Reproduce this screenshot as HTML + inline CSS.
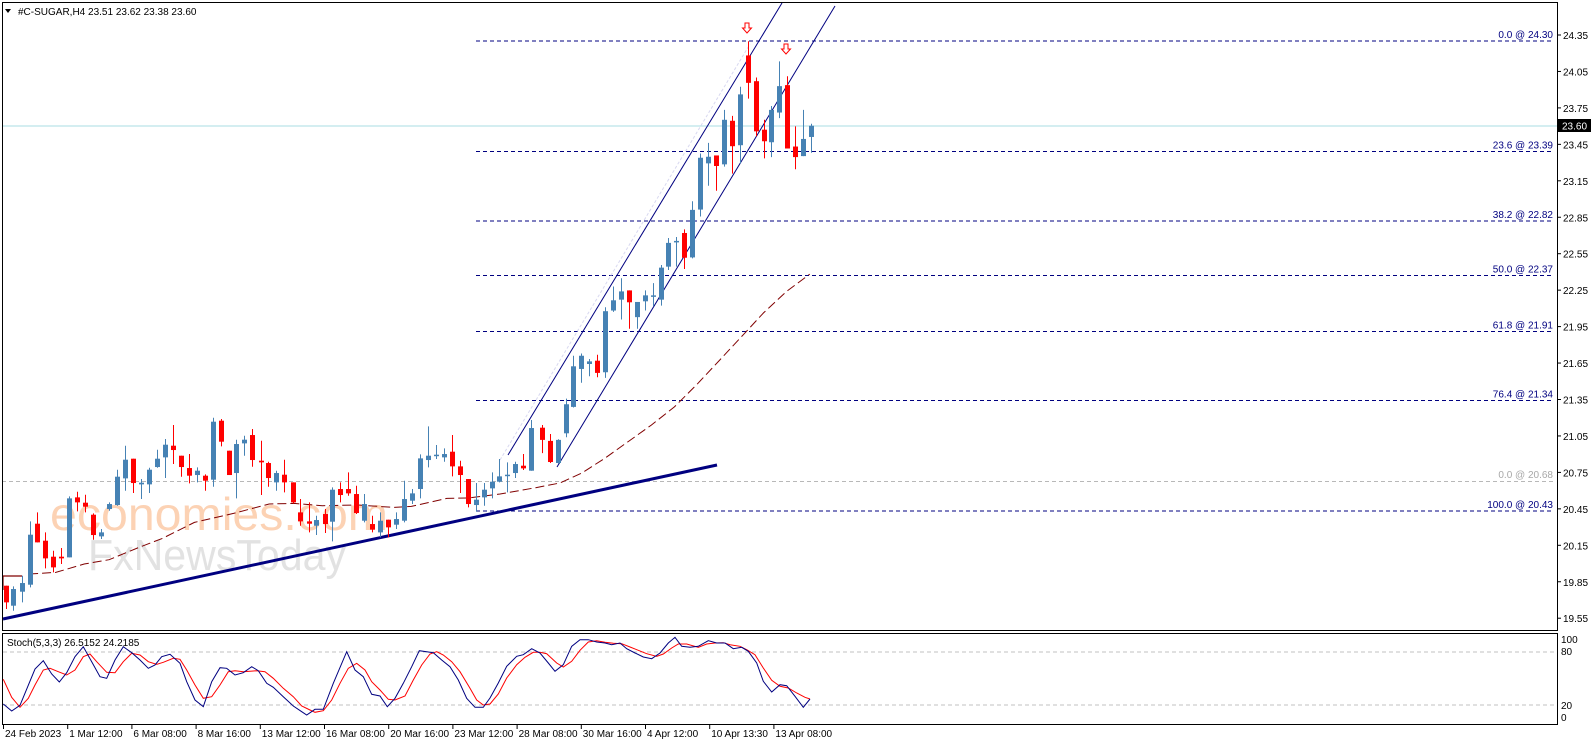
<!DOCTYPE html>
<html><head><meta charset="utf-8">
<style>
html,body{margin:0;padding:0;background:#fff;width:1596px;height:743px;overflow:hidden}
svg{display:block}
text{font-family:"Liberation Sans","DejaVu Sans",sans-serif;font-size:10px}
</style></head>
<body>
<svg id="s" width="1596" height="743" xmlns="http://www.w3.org/2000/svg">
<rect width="1596" height="743" fill="#fff"/>
<text x="50" y="530" font-size="46" fill="#FCD2B4" textLength="338" lengthAdjust="spacingAndGlyphs" style="font-size:46px">economies.com</text>
<text x="88" y="570" font-size="44" fill="#E2E2E2" textLength="258" lengthAdjust="spacingAndGlyphs" style="font-size:44px">FxNewsToday</text>
<g id="g"></g>
</svg>
<script>
var NS="http://www.w3.org/2000/svg",g=document.getElementById('g');
function el(t,a,txt){var e=document.createElementNS(NS,t);for(var k in a)e.setAttribute(k,a[k]);if(txt!=null)e.textContent=txt;g.appendChild(e);return e;}
function P(p){return 35+(24.35-p)*121.5;}
el('line',{x1:2,y1:126,x2:1557,y2:126,stroke:'#A8DDE3','stroke-width':1});
el('line',{x1:2,y1:481.5,x2:1553,y2:481.5,stroke:'#B8B8B8','stroke-dasharray':'4 3'});
el('text',{x:1553,y:478,'text-anchor':'end',fill:'#A8A8A8'},'0.0 @ 20.68');
var fib=[['0.0 @ 24.30',41],['23.6 @ 23.39',151.5],['38.2 @ 22.82',221],['50.0 @ 22.37',275.5],['61.8 @ 21.91',331.5],['76.4 @ 21.34',400.5],['100.0 @ 20.43',511]];
fib.forEach(function(f){el('line',{x1:476,y1:f[1],x2:1553,y2:f[1],stroke:'#000080','stroke-dasharray':'4 3'});el('text',{x:1553,y:f[1]-3,'text-anchor':'end',fill:'#000080'},f[0]);});
var ma5=[[75,595],[150,590],[230,565],[300,552],[380,517],[450,488],[540,440],[650,413],[750,385],[820,383],[900,390],[1000,388],[1100,395],[1150,392],[1250,368],[1310,367],[1400,355],[1500,336],[1568,322]];
var ma6=[[300,1430],[370,1385],[440,1335],[510,1285],[580,1230],[650,1160],[720,1085],[790,1010],[850,945],[920,880],[990,828]];
var pts=[];ma5.forEach(function(p){pts.push((6+(p[0]-10)*0.3555).toFixed(1)+','+(375.7+p[1]/3).toFixed(1));});
ma6.forEach(function(p){pts.push((483+p[0]*0.33).toFixed(1)+','+(1+p[1]*0.33).toFixed(1));});
el('polyline',{points:pts.join(' '),fill:'none',stroke:'#800000','stroke-dasharray':'9 4','stroke-width':1});
el('polyline',{points:'3,590 3,576 22,576',fill:'none',stroke:'#800000','stroke-width':1.2});
el('line',{x1:3,y1:619,x2:717,y2:465,stroke:'#000080','stroke-width':3});
el('line',{x1:508,y1:455,x2:782,y2:3,stroke:'#000080','stroke-width':1});
el('line',{x1:557,y1:467,x2:835,y2:6,stroke:'#000080','stroke-width':1});
el('line',{x1:500,y1:460,x2:750,y2:44,stroke:'#D8D8F0','stroke-width':1,'stroke-dasharray':'3 2'});
var A=[[10,'r',630,680,630,700],[30,'b',640,690,632,705],[55,'b',622,648,600,680],[77,'b',477,627,437,635],[98,'r',444,500,410,500],[120,'r',495,548,470,578],[143,'r',543,575,525,590],[166,'r',543,548,517,565],[188,'b',368,545,362,545],[210,'r',365,380,348,407],[233,'r',381,393,357,410],[255,'r',417,478,413,492],[278,'b',470,482,460,490],[300,'b',385,400,380,405],[322,'b',303,388,282,390],[345,'b',252,308,210,345],[368,'r',249,322,249,352],[390,'b',321,326,310,370],[412,'b',282,326,276,352],[435,'b',249,274,222,276],[458,'b',207,245,190,307],[480,'r',210,223,148,265],[503,'r',240,274,240,303],[525,'r',277,300,235,323],[547,'b',285,298,275,320],[570,'r',300,315,296,345],[592,'b',138,312,126,333],[614,'r',135,198,130,212],[636,'r',225,298,225,298],[658,'b',205,292,192,368],[680,'b',192,203,180,240],[703,'r',178,253,160,273],[727,'r',255,260,195,358],[748,'r',262,307,258,333],[770,'b',292,320,285,345],[793,'r',297,320,252,350],[816,'r',320,380,320,383],[838,'r',410,437,370,450],[862,'r',437,444,380,470],[883,'b',433,450,420,478],[906,'r',415,445,400,472],[928,'b',342,438,335,497],[950,'r',340,358,320,380],[972,'r',340,353,290,360],[995,'r',355,412,330,415],[1018,'b',385,435,355,440],[1040,'r',445,462,420,470],[1062,'b',435,470,410,485],[1085,'r',432,455,432,485],[1107,'b',430,447,410,460],[1130,'b',370,435,315,440],[1152,'b',353,375,340,385],[1175,'b',248,340,236,368],[1197,'b',240,253,152,275],[1220,'b',237,240,208,250],[1242,'b',235,245,218,258],[1265,'r',228,272,178,302],[1287,'r',272,298,255,352],[1310,'r',310,385,310,395],[1332,'b',372,388,322,408],[1355,'b',342,365,322,390],[1376,'b',318,338,290,368],[1398,'b',302,318,250,320],[1420,'b',297,300,260,350],[1443,'b',265,292,258,307],[1465,'r',270,278,235,283],[1487,'b',157,285,133,285]];
var B=[[178,'r',1293,1330,1285,1370],[202,'r',1333,1397,1312,1400],[226,'b',1330,1400,1328,1402],[250,'b',1222,1310,1205,1322],[274,'b',1107,1230,1075,1232],[298,'b',1075,1115,1068,1157],[322,'b',1092,1100,1085,1137],[346,'r',1090,1127,1072,1140],[370,'b',940,1125,928,1142],[394,'b',907,938,865,942],[418,'b',880,905,840,965],[442,'r',877,913,877,993],[466,'b',912,958,912,993],[490,'b',892,910,877,938],[514,'b',892,895,855,925],[538,'b',808,905,800,923],[562,'b',733,805,718,815],[586,'b',727,730,715,805],[610,'r',703,778,692,812],[634,'b',633,777,607,780],[658,'b',475,632,462,653],[682,'b',472,492,430,560],[706,'r',468,500,468,575],[730,'b',360,495,330,502],[754,'r',363,440,348,523],[778,'b',283,437,260,492],[802,'r',165,248,122,296],[826,'r',243,395,232,410],[850,'r',390,425,360,477],[874,'b',330,428,318,473],[898,'b',258,338,183,355],[922,'r',255,447,228,447],[946,'r',441,473,380,510],[970,'b',418,470,330,470],[994,'b',378,412,372,460]];
function candle(x,c,bt,bb,wt,wb){x=Math.round(x);var col=c=='r'?'#FF0000':'#4682B4';
el('line',{x1:x+0.5,y1:wt,x2:x+0.5,y2:wb,stroke:col,'stroke-width':1});
var h=Math.max(bb-bt,1.5);el('rect',{x:x-2,y:bt,width:5,height:h,fill:col});}
A.forEach(function(c){candle(6+(c[0]-10)*0.3555,c[1],375.7+c[2]/3,375.7+c[3]/3,375.7+c[4]/3,375.7+c[5]/3);});
B.forEach(function(c){var f=function(v){return 1+v*0.33};candle(483+c[0]*0.33,c[1],f(c[2]),f(c[3]),f(c[4]),f(c[5]));});
function arrow(x,y){el('path',{d:'M'+(x-2)+','+y+' h4 v5 h2.5 l-4.5,5 l-4.5,-5 h2.5 z',fill:'#fff',stroke:'#FF0000','stroke-width':1});}
arrow(747,23);arrow(786,44);
el('rect',{x:2.5,y:2.5,width:1555,height:628,fill:'none',stroke:'#000','stroke-width':1});
el('rect',{x:2.5,y:633.5,width:1555,height:91,fill:'none',stroke:'#000','stroke-width':1});
el('path',{d:'M5,9 h6 l-3,4 z',fill:'#000'});
el('text',{x:18,y:15,fill:'#000'},'#C-SUGAR,H4  23.51 23.62 23.38 23.60');
var lab=['24.35','24.05','23.75','23.45','23.15','22.85','22.55','22.25','21.95','21.65','21.35','21.05','20.75','20.45','20.15','19.85','19.55'];
lab.forEach(function(l){var y=P(parseFloat(l));el('line',{x1:1557,y1:y,x2:1561,y2:y,stroke:'#000'});el('text',{x:1563,y:y+4,fill:'#000'},l);});
el('rect',{x:1558,y:119,width:33,height:13,fill:'#000'});
el('text',{x:1562,y:129.5,fill:'#fff'},'23.60');
el('line',{x1:3,y1:652,x2:1557,y2:652,stroke:'#C0C0C0','stroke-dasharray':'4 3'});
el('line',{x1:3,y1:705,x2:1557,y2:705,stroke:'#C0C0C0','stroke-dasharray':'4 3'});
el('text',{x:7,y:646,fill:'#000'},'Stoch(5,3,3) 26.5152 24.2185');
[['100',643],['80',655],['20',709],['0',721]].forEach(function(a){el('text',{x:1561,y:a[1],fill:'#000'},a[0]);});
var b3=[[10,312],[35,333],[60,316],[105,207],[130,182],[155,222],[178,246],[200,218],[225,170],[250,140],[275,185],[300,230],[320,235],[345,180],[370,140],[395,158],[420,180],[445,205],[465,195],[485,170],[510,163],[540,190],[560,245],[585,300],[610,320],[635,245],[660,203],[680,205],[705,225],[730,218],[755,200],[775,212],[800,250],[820,262],[850,290],[880,318],[905,335],[920,345],[945,328],[970,328],[1000,250],[1040,155],[1065,210],[1090,230],[1115,283],[1140,288],[1162,320],[1185,295],[1210,250],[1235,200],[1258,152],[1280,155],[1300,158],[1325,180],[1350,200],[1375,240],[1400,295],[1425,322],[1450,322]];
var r3=[[10,238],[35,292],[60,322],[85,295],[105,255],[130,210],[150,205],[175,215],[200,225],[225,210],[250,170],[270,162],[290,185],[320,217],[345,218],[370,185],[395,160],[420,165],[445,185],[470,193],[490,187],[520,175],[540,178],[560,210],[585,255],[610,295],[635,290],[660,255],[685,215],[705,212],[730,215],[770,212],[795,215],[820,235],[850,265],[880,290],[905,318],[930,330],[945,337],[970,332],[995,300],[1020,250],[1045,205],[1070,190],[1095,210],[1115,245],[1140,270],[1165,298],[1185,300],[1215,288],[1240,240],[1265,195],[1290,162],[1310,155],[1330,165],[1355,185],[1380,215],[1410,265],[1430,300],[1450,315]];
var b7=[[0,240],[25,195],[50,145],[80,115],[100,110],[125,92],[150,105],[175,135],[195,160],[220,140],[245,85],[270,65],[295,65],[320,72],[345,75],[365,80],[390,75],[410,92],[435,105],[460,117],[485,122],[510,105],[535,75],[555,58],[575,85],[600,88],[625,85],[655,68],[680,75],[705,75],[730,92],[755,88],[775,100],[800,135],[820,190],[845,222],[870,200],[890,203],[915,235],[940,268],[960,243]];
var r7=[[0,258],[25,228],[50,180],[80,140],[105,118],[130,103],[150,103],[170,107],[200,135],[220,147],[245,130],[270,97],[295,72],[320,68],[345,73],[370,76],[395,77],[420,87],[445,97],[470,107],[500,115],[520,108],[545,90],[565,78],[590,78],[625,88],[650,78],[675,75],[700,74],[720,80],[750,85],[770,95],[795,110],[820,150],[845,187],[870,205],[895,210],[920,225],[945,238],[960,243]];
function line(a,b,col){var p=[];a.forEach(function(q){p.push((q[0]/3).toFixed(1)+','+(600+q[1]/3).toFixed(1));});b.forEach(function(q){p.push((490+q[0]/3).toFixed(1)+','+(618+q[1]/3).toFixed(1));});el('polyline',{points:p.join(' '),fill:'none',stroke:col,'stroke-width':1});}
line(r3,r7,'#FF0000');line(b3,b7,'#000080');
var tl=['24 Feb 2023','1 Mar 12:00','6 Mar 08:00','8 Mar 16:00','13 Mar 12:00','16 Mar 08:00','20 Mar 16:00','23 Mar 12:00','28 Mar 08:00','30 Mar 16:00','4 Apr 12:00','10 Apr 13:30','13 Apr 08:00'];
tl.forEach(function(t,i){var x=3+64.2*i;el('line',{x1:x+0.5,y1:725,x2:x+0.5,y2:729,stroke:'#000'});el('text',{x:x+2,y:737,fill:'#000'},t);});
</script>
</body></html>
